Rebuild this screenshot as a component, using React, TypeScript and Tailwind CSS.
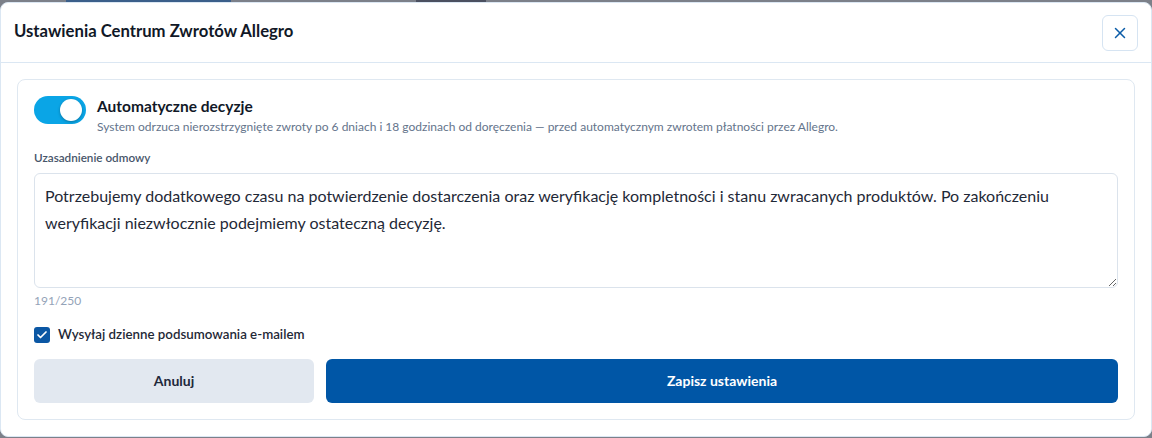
import React from "react";
import {X, Check} from "lucide-react";

const reason =
    "Potrzebujemy dodatkowego czasu na potwierdzenie dostarczenia oraz weryfikację kompletności i stanu zwracanych produktów. Po zakończeniu weryfikacji niezwłocznie podejmiemy ostateczną decyzję.";

const App: React.FC = () => {
    return (
        <div className="w-[1152px] h-[438px] bg-[#7c8089] font-['Lato',sans-serif] overflow-hidden">
            {/* strip of page behind the backdrop */}
            <div className="flex h-[2px] items-stretch">
                <span className="ml-[66px] w-[165px] bg-[#3b5f8a]"/>
                <span className="ml-[185px] w-[70px] bg-[#4b5060]"/>
            </div>

            <div className="w-[1152px] bg-white rounded-lg border border-[#dbe7f3] flex flex-col">
                <div className="flex items-center justify-between h-[60px] pl-[13px] pr-[13px] border-b border-[#dbe7f3]">
                    <h2 className="text-[16.7px] font-bold text-[#111827] -mt-px">Ustawienia Centrum Zwrotów Allegro</h2>
                    <button className="w-9 h-9 flex items-center justify-center rounded-md border border-[#d6e4f2] text-[#0b5ca8]">
                        <X size={18} strokeWidth={2}/>
                    </button>
                </div>

                <div className="p-4">
                    <div className="rounded-lg border border-[#dfe8f1] p-4 flex flex-col">
                        <div className="flex items-start">
                            <button className="w-[52px] h-7 rounded-full bg-[#0aa5e6] flex items-center justify-end px-[4px] shrink-0">
                                <span className="w-[22px] h-[22px] rounded-full bg-white shadow-[0_1px_3px_rgba(0,0,0,0.3)]"/>
                            </button>
                            <div className="ml-[11px] flex flex-col">
                                <span className="text-[15.5px] leading-5 font-bold text-[#111827]">Automatyczne decyzje</span>
                                <span className="mt-[3px] text-xs leading-4 text-[#64748b]">
                                    System odrzuca nierozstrzygnięte zwroty po 6 dniach i 18 godzinach od doręczenia — przed automatycznym zwrotem płatności przez Allegro.
                                </span>
                            </div>
                        </div>

                        <label className="mt-[14px] text-[11.7px] leading-4 font-semibold text-[#475569]">Uzasadnienie odmowy</label>
                        <textarea
                            defaultValue={reason}
                            className="mt-2 h-[115px] w-full rounded-md border border-[#dbe3ec] px-[10px] py-2 text-base leading-[27px] text-[#1f2937] outline-none"
                        />
                        <span className="mt-[5px] text-xs leading-4 text-[#94a3b8]">191/250</span>

                        <div className="mt-4 flex items-center h-5 gap-2">
                            <span className="w-4 h-4 rounded-[3px] bg-[#0b57a4] flex items-center justify-center text-white">
                                <Check size={12} strokeWidth={3.5}/>
                            </span>
                            <span className="text-[13.3px] font-semibold text-[#1f2937]">Wysyłaj dzienne podsumowania e-mailem</span>
                        </div>

                        <div className="mt-[14px] flex gap-3">
                            <button className="w-[280px] h-11 rounded-md bg-[#e2e8f0] text-sm font-bold text-[#1e293b]">Anuluj</button>
                            <button className="flex-1 h-11 rounded-md bg-[#0056a6] text-sm font-bold text-white">Zapisz ustawienia</button>
                        </div>
                    </div>
                </div>
            </div>
        </div>
    );
};

export default App;
